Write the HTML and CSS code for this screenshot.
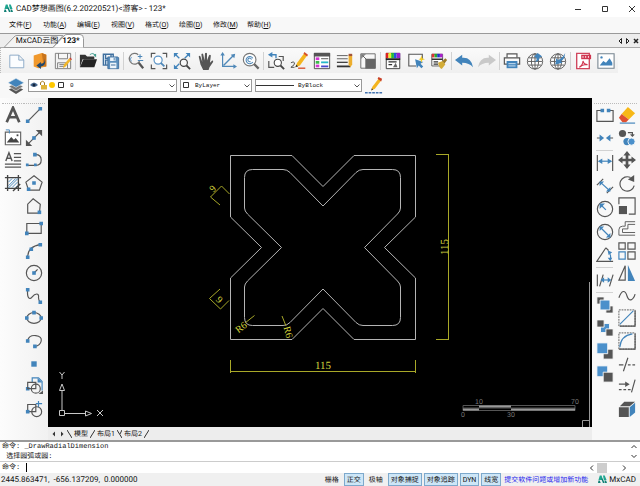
FILE: index.html
```
<!DOCTYPE html>
<html lang="zh-CN">
<head>
  <meta charset="UTF-8" />
  <meta name="viewport" content="width=device-width, initial-scale=1.0" />
  <title>CAD梦想画图</title>
  <link rel="stylesheet" href="styles.css">
</head>
<body>
  <svg class="defs" aria-hidden="true">
    <symbol id="logo" viewBox="0 0 20 20">
      <path d="M4 1h4l3 10H1zM11 1h4l4 10h-6z" fill="#1fa590"/>
      <path d="M1 12h3l2 6H0zM7 8h3l5 10h-4zM14 12h4l2 6h-4z" fill="#0f7f74"/>
    </symbol>
    <symbol id="down" viewBox="0 0 8 8"><path d="M1.500 2.500L4 5l2.500-2.500" fill="none" stroke="#555"/></symbol>
  </svg>

  <header class="title-bar">
    <svg class="logo"><use href="#logo"/></svg>
    <h1>CAD梦想画图(6.2.20220521)&lt;游客&gt; - 123*</h1>
    <div class="window-buttons">
      <button aria-label="最小化"><svg viewBox="0 0 8 8"><path d="M1 4.500h6"/></svg></button>
      <button aria-label="最大化"><svg viewBox="0 0 8 8"><path d="M1.500 1.500h5v5h-5z"/></svg></button>
      <button aria-label="关闭"><svg viewBox="0 0 8 8"><path d="M1 1l6 6M7 1L1 7"/></svg></button>
    </div>
  </header>

  <nav class="menu">
    <button>文件(<u>F</u>)</button>
    <button>功能(<u>A</u>)</button>
    <button>编辑(<u>E</u>)</button>
    <button>视图(<u>V</u>)</button>
    <button>格式(<u>O</u>)</button>
    <button>绘图(<u>D</u>)</button>
    <button>修改(<u>M</u>)</button>
    <button>帮助(<u>H</u>)</button>
  </nav>

  <div class="doc-tabs">
    <svg class="tab-shape" viewBox="0 0 90 14"><path d="M4 13.500L14 3q1-1.500 3-1.500h46L53 13.500z" fill="#f4f4f4"/><path d="M53 13.500L64 2q1-1.500 3-1.500h13q3.500 0 3.500 4v9" fill="#fff"/></svg>
    <button class="doc-tab">MxCAD云图</button>
    <button class="doc-tab active">123*</button>
    <div class="tab-nav">
      <button aria-label="上一个"><svg viewBox="0 0 8 8"><path d="M5.500 1.500v5L3 4z"/></svg></button>
      <button aria-label="下一个"><svg viewBox="0 0 8 8"><path d="M2.500 1.500v5L5 4z"/></svg></button>
      <button aria-label="关闭图纸"><svg viewBox="0 0 8 8"><path d="M2 2l4 4M6 2L2 6" stroke-width="1.500"/></svg></button>
    </div>
  </div>

  <div class="toolbar">
    <div class="group">
      <button aria-label="新建"><svg viewBox="0 0 20 20"><path d="M2 3.500h10l5.500 5.500v8.500H2zM12 3.500V9h5.500" fill="#fbfdff" stroke="#86a5c4"/></svg></button>
      <button aria-label="打开图纸"><svg viewBox="0 0 20 20"><path d="M3 4l9-3 5 2v13l-9 2-5-2z" fill="#f0982c"/><path d="M12 1l5 2v13h-3z" fill="#c8741c"/><path d="M15 7c1 4-1 6-4 6v-2l-5 4 5 4v-3c4 0 6-4 4-9z" fill="#23476b"/></svg></button>
      <button aria-label="保存"><svg viewBox="0 0 20 20"><path d="M1.500 1.500h17v17h-17zM5 1.500v6h10v-6M4 18v-6h11v6M6 14h7M6 16h6" fill="#f3f3f3" stroke="#777"/><path d="M10 18l1-4 6-7 2 2-6 7z" fill="#f0b62b"/><path d="M17 7l2 2 1-1-2-2z" fill="#c33"/></svg></button>
    </div>
    <i class="sep"></i>
    <div class="group">
      <button aria-label="打开"><svg viewBox="0 0 20 20"><path d="M1 17V3h6l2 2h8v3H4z" fill="#333"/><path d="M5 8h15l-3 9H1z" fill="#222"/><path d="M12 3q4-3 6 1" fill="none" stroke="#3d9b8c"/><path d="M16 3l3-1v4z" fill="#3d9b8c"/></svg></button>
      <button aria-label="另存为"><svg viewBox="0 0 20 20"><path d="M1.500 2.500h11v12h-11zM4 3v4h6V3M4 14V9h6" fill="#dce9f4" stroke="#3f6f9e" stroke-width="1.500"/><path d="M6.500 5.500h11l1 1v12h-12z" fill="#5b8fbd" stroke="#3f6f9e"/><path d="M9 6h6v4H9zM9 12h7v6H9z" fill="#eef5fb"/><path d="M13 6.500h1v3h-1zM10 14h5v1h-5z" fill="#3f6f9e"/></svg></button>
    </div>
    <i class="sep"></i>
    <div class="group">
      <button aria-label="缩放"><svg viewBox="0 0 20 20"><path d="M12.500 3A6 6 0 1 0 14 10" fill="none" stroke="#777" stroke-width="1.300"/><path d="M5 5.500a3.500 3.500 0 0 0 0 5" fill="none" stroke="#5b93c5"/><path d="M13 12l5 6" stroke="#555" stroke-width="2.500"/><path d="M12 5h5M14.500 2.500v5M12 9.500h6" stroke="#4f88b8" stroke-width="1.200"/></svg></button>
      <button aria-label="窗口缩放"><svg viewBox="0 0 20 20"><path d="M1.500 6V1.500H6M14 1.500h4.500V6M1.500 14v4.500H6M14 18.500h4.500V14" fill="none" stroke="#555" stroke-width="1.300"/><circle cx="9" cy="9" r="4.500" fill="#fff" stroke="#5b93c5" stroke-width="1.300"/><path d="M12 12l4 4" stroke="#4f88b8" stroke-width="2"/></svg></button>
      <button aria-label="全图"><svg viewBox="0 0 20 20"><path d="M1 1h5L1 6zM19 1h-5l5 5zM1 19h5l-5-5z" fill="#4284bb"/><path d="M3 3l4 4M17 3l-4 4M3 17l4-4" stroke="#4284bb" stroke-width="1.500"/><circle cx="12" cy="12" r="4" fill="#f8f8f8" stroke="#444" stroke-width="1.300"/><path d="M15 15l4 4" stroke="#444" stroke-width="2"/></svg></button>
      <button aria-label="平移"><svg viewBox="0 0 20 20"><path d="M3 5q1-1.500 2 0l2 6L6 2.500q1-1.500 2 0l1.500 7 .5-8q1.200-1.500 2.200 0v8L14.500 3.500q1.300-1.200 2 .5L15.500 12l2.500-2.500q1.500 0 1 1.500l-4 6-1 3H8l-3-6z" fill="#555"/></svg></button>
      <button aria-label="坐标系"><svg viewBox="0 0 20 20"><path d="M4 2v14h13" fill="none" stroke="#4f88b8" stroke-width="1.300"/><path d="M5 15L16 4" stroke="#4f88b8" stroke-width="1.500"/><path d="M18 2l-1 5-4-4zM4 0l2.500 4h-5zM20 16l-4 2.500v-5z" fill="#4f88b8"/></svg></button>
      <button aria-label="动态缩放"><svg viewBox="0 0 20 20"><circle cx="8.500" cy="8.500" r="7" fill="#fff" stroke="#777" stroke-width="1.300"/><path d="M12 7a4 4 0 1 0 0 4M10.500 8.500a2 2 0 1 0-1 2" fill="none" stroke="#4f88b8" stroke-width="1.200"/><path d="M13.500 13.500l5 5" stroke="#666" stroke-width="2.500"/></svg></button>
    </div>
    <i class="sep"></i>
    <div class="group">
      <button aria-label="查找"><svg viewBox="0 0 20 20"><path d="M2 10v7h6M13 5h5v5" fill="none" stroke="#555" stroke-width="1.300"/><path d="M6 0v6L1 3z" fill="#4284bb"/><path d="M5 3h5v4" fill="none" stroke="#4284bb" stroke-width="1.500"/><circle cx="12" cy="12" r="4" fill="#fff" stroke="#444" stroke-width="1.200"/><path d="M15 15l4 4" stroke="#444" stroke-width="2"/></svg></button>
      <button aria-label="画笔"><svg viewBox="0 0 20 20"><path d="M6 17l2-5 8-11 3 3-8 11z" fill="#f4b51e"/><path d="M15 2l1-2 4 3-1 2z" fill="#d64f2b"/><path d="M6 17l1-3 2 2z" fill="#333"/><path d="M1 12q3-2 4 0t-4 5h4" fill="none" stroke="#444"/><path d="M9 18h8" stroke="#d64f2b" stroke-width="1.500"/></svg></button>
      <button aria-label="图层管理"><svg viewBox="0 0 20 20"><path d="M1.500 1.500h17v17h-17z" fill="#fff" stroke="#444"/><path d="M1 1h18v4H1z" fill="#555"/><path d="M3 6h4v3H3z" fill="#d436d4"/><path d="M3 10h4v3H3z" fill="#3bbb4a"/><path d="M3 14h4v3H3z" fill="#d436d4"/><path d="M9 7h8v1H9z" fill="#444"/><path d="M9 10.500h8v2H9z" fill="#25b8c9"/><path d="M9 15h8v2H9z" fill="#4646cc"/></svg></button>
      <button aria-label="线型"><svg viewBox="0 0 20 20"><path d="M1 4h12M1 7.500h12" stroke="#555"/><path d="M1 11.500h12" stroke="#444" stroke-width="1.500"/><path d="M1 16h15" stroke="#333" stroke-width="2"/><path d="M14 3.500h4V14L16 17l-2-3z" fill="#edae2e"/><path d="M14 2h4v2.500h-4z" fill="#a2553a"/></svg></button>
      <button aria-label="块"><svg viewBox="0 0 20 20"><path d="M2 2h16v16H2z" fill="#f7f7f7" stroke="#666"/><path d="M7 7.500h11.500v11H7z" fill="#666"/><path d="M2 2h6L2 8z" fill="#888"/><path d="M4 4l4 4" stroke="#555"/></svg></button>
    </div>
    <i class="sep"></i>
    <div class="group">
      <button aria-label="颜色"><svg viewBox="0 0 20 20"><path d="M2.500 1.500h15v17h-15z" fill="#fff" stroke="#333"/><path d="M2 1h3v6H2z" fill="#d22"/><path d="M5 1h3v6H5z" fill="#ee3"/><path d="M8 1h3v6H8z" fill="#2b3"/><path d="M11 1h3v6h-3z" fill="#25d"/><path d="M14 1h4v6h-4z" fill="#92c"/><path d="M2 8h16" stroke="#222" stroke-width="2"/><path d="M5 11h9M5 14h4" stroke="#333" stroke-width="1.500"/><path d="M10 17l3-5 2 5z" fill="#666"/></svg></button>
      <button aria-label="快速选择"><svg viewBox="0 0 20 20"><path d="M17 9V2.500H2v13h8" fill="#fafafa" stroke="#555" stroke-width="1.200"/><path d="M9 8l9 3-3 2 3 3-2 2-3-3-2 3z" fill="#4284bb"/><path d="M16 4l1 3 3 1-3 1-1 3-1-3-2-1 2-1z" fill="#f1cb28"/></svg></button>
      <button aria-label="格式刷"><svg viewBox="0 0 20 20"><path d="M2 2.500h12v13H2z" fill="#fff" stroke="#555"/><path d="M2 2h3v4H2z" fill="#d33"/><path d="M5 2h3v4H5z" fill="#2a3"/><path d="M8 2h3v4H8z" fill="#23c"/><path d="M11 2h3v4h-3z" fill="#a2c"/><path d="M2 8h12M4 11h5M4 13.500h5" stroke="#333" stroke-width="1.500"/><path d="M9 12l5-2 3 4-4 5q-3-1-4-7z" fill="#d3ac36"/><path d="M14 10l3-3 2 2-3 4z" fill="#9c7a25"/></svg></button>
    </div>
    <i class="sep"></i>
    <div class="group">
      <button aria-label="撤销"><svg viewBox="0 0 20 20"><path d="M0 9l8-6v3.500q10-1 12 10.500-4-5-12-5v3z" fill="#4284bb"/></svg></button>
      <button aria-label="重做"><svg viewBox="0 0 20 20"><path d="M20 9l-8-6v3.500Q2 5.500 0 17q4-5 12-5v3z" fill="#c9c9c9"/></svg></button>
    </div>
    <i class="sep"></i>
    <div class="group">
      <button aria-label="打印"><svg viewBox="0 0 20 20"><path d="M4.500 6V2h11v4" fill="#fff" stroke="#555" stroke-width="1.300"/><path d="M1.500 6.500h17v7h-17z" fill="#f8f8f8" stroke="#555" stroke-width="1.300"/><path d="M4 10h12v8H4z" fill="#4284bb"/><path d="M6 13h8M6 15.500h8" stroke="#dcecf8"/></svg></button>
      <button aria-label="上传"><svg viewBox="0 0 20 20"><circle cx="10" cy="10.500" r="8.500" fill="#fff" stroke="#555"/><ellipse cx="10" cy="10.500" rx="4" ry="8.500" fill="none" stroke="#555"/><path d="M10 2v17M2 10.500h16M3 6.500h14M3 14.500h14" stroke="#555"/><path d="M13 1l5 4-3 1q0 4-5 5 3-3 1-5l-2-1z" fill="#4284bb"/></svg></button>
      <button aria-label="下载"><svg viewBox="0 0 20 20"><circle cx="10" cy="10.500" r="8.500" fill="#fff" stroke="#555"/><ellipse cx="10" cy="10.500" rx="4" ry="8.500" fill="none" stroke="#555"/><path d="M10 2v17M2 10.500h16M3 6.500h14M3 14.500h14" stroke="#555"/><path d="M18 1q-1 8-5 9l2 2-8 2 1-7 2 2q5-2 8-8z" fill="#4284bb"/></svg></button>
    </div>
    <i class="sep"></i>
    <div class="group">
      <button aria-label="导出PDF"><svg viewBox="0 0 20 20"><path d="M3 1.500h14v17H3z" fill="#fff" stroke="#d0455c" stroke-width="1.500"/><path d="M8 3h11v5H8z" fill="#cf3650"/><path d="M10 4.500v2M13 4.500v2M16 4.500v2" stroke="#fff"/><path d="M6 17q4-3 4-7 1 4 5 4-5-1-9 3z" fill="none" stroke="#d0354f" stroke-width="1.200"/></svg></button>
      <button aria-label="导出图片"><svg viewBox="0 0 20 20"><path d="M1 2h18v16H1z" fill="#fff" stroke="#76848f" stroke-width="1.200"/><path d="M3 15l4-5 3 2 4-5 3 5v3z" fill="#4284bb"/><circle cx="5" cy="6" r="1.300" fill="#4284bb"/></svg></button>
    </div>
  </div>

  <div class="properties">
    <button class="layers" aria-label="图层"><svg viewBox="0 0 20 20"><path d="M2 14l8-4 8 4-8 5z" fill="#555"/><path d="M2 10.500l8-4 8 4-8 5z" fill="#777" stroke="#f8f8f8" stroke-width=".6"/><path d="M1 6.500l9-5 9 5-9 5z" fill="#4284bb" stroke="#f8f8f8" stroke-width=".6"/></svg></button>
    <div class="combo layer-combo">
      <select aria-label="当前图层"><option>0</option></select>
      <svg class="combo-icons" viewBox="0 0 36 10">
        <path d="M1 5q4-5 8 0-4 4-8 0z" fill="#4d6d93"/><circle cx="5" cy="5" r="1.500" fill="#12253e"/>
        <path d="M11.500 5V2.500q2-2.500 4 0V5" fill="none" stroke="#a97b1e"/><path d="M12 5h6v4.500h-6z" fill="#deb43a"/>
        <circle cx="23" cy="5" r="3" fill="#ffc800"/>
        <path d="M29.500 2.500h5v5h-5z" fill="#fff" stroke="#333"/>
      </svg>
      <svg class="arrow"><use href="#down"/></svg>
    </div>
    <div class="combo color-combo">
      <select aria-label="颜色"><option>ByLayer</option></select>
      <svg class="combo-icons" viewBox="0 0 10 10"><path d="M2.500 2.500h5v5h-5z" fill="#fff" stroke="#333"/></svg>
      <svg class="arrow"><use href="#down"/></svg>
    </div>
    <div class="combo line-combo">
      <select aria-label="线型"><option>ByBlock</option></select>
      <svg class="combo-icons" viewBox="0 0 38 10"><path d="M0 5.500h38" stroke="#333"/></svg>
      <svg class="arrow"><use href="#down"/></svg>
    </div>
    <button class="layers" aria-label="线宽"><svg viewBox="0 0 20 20"><path d="M7 15l1-4 7-9 3 2-7 9z" fill="#f4b51e"/><path d="M14 2l1-2 4 2-1 3z" fill="#c9412a"/><path d="M7 15l.5-2.500 1.500 1.500z" fill="#333"/><path d="M0 17.500h20" stroke="#4373b0" stroke-width="1.500" stroke-dasharray="3 1"/></svg></button>
  </div>

  <main>
    <aside class="rail left-rail">
      <div class="tools text-tools">
        <button aria-label="文字"><svg viewBox="0 0 20 20"><path d="M3 18L10 2l7 16M6 12.500h8" fill="none" stroke="#555" stroke-width="3"/></svg></button>
        <button aria-label="图片"><svg viewBox="0 0 20 20"><path d="M1.500 3.500h17v14h-17z" fill="#fff" stroke="#666" stroke-width="1.300"/><path d="M3 15l5-6 3 3 2-2 4 5z" fill="#444"/><path d="M15 6v2" stroke="#444" stroke-width="2"/><path d="M2 1h4v4" fill="none" stroke="#4284bb"/></svg></button>
        <button aria-label="多行文字"><svg viewBox="0 0 20 20"><path d="M2 11l3.500-9L9 11M3 8h5" fill="none" stroke="#555" stroke-width="1.600"/><path d="M11 3h8M11 7h8M11 11h8M1 14.500h18M1 18h18" stroke="#555" stroke-width="1.400"/></svg></button>
        <button aria-label="填充"><svg viewBox="0 0 20 20"><path d="M4 1v18M16 1v18M1 4h18M1 16h18" stroke="#444" stroke-width="1.500"/><path d="M5 9l4-4M5 13l8-8M5 15.500L15.500 5M9 15l6-6M13 15l2-2" stroke="#4284bb"/><path d="M10 19l8-8" stroke="#444" stroke-width="1.500"/></svg></button>
      </div>
      <div class="tools draw-tools">
        <button aria-label="直线"><svg viewBox="0 0 20 20"><path d="M3 17L17 3"/><path class="dot" d="M1 15h4v4H1zM15 1h4v4h-4z"/></svg></button>
        <button aria-label="构造线"><svg viewBox="0 0 20 20"><path d="M3 17L17 3"/><path class="tip" d="M1 19v-7l7 7zM19 1v7l-7-7z"/><path class="dot" d="M8 8h4v4H8z"/></svg></button>
        <button aria-label="多段线"><svg viewBox="0 0 20 20"><path d="M2 16h10q6 0 6-6t-6-6h-2"/><path class="dot" d="M1 14h3v3H1zM10 14h3v3h-3zM9 2h4v4H9z"/></svg></button>
        <button aria-label="正多边形"><svg viewBox="0 0 20 20"><path d="M10 2l9 7-3 9H4L1 9z"/><path class="dot" d="M8 8h4v4H8zM2 15h4v4H2z"/></svg></button>
        <button aria-label="多边形"><svg viewBox="0 0 20 20"><path d="M9 2l8 6-1 10H3V8z"/><path class="dot" d="M14 15h4v4h-4z"/></svg></button>
        <button aria-label="矩形"><svg viewBox="0 0 20 20"><path d="M2 5h16v11H2z"/><path class="dot" d="M0 14h4v4H0zM16 3h4v4h-4z"/></svg></button>
        <button aria-label="圆弧"><svg viewBox="0 0 20 20"><path d="M3 17Q3 5 17 3"/><path class="dot" d="M1 15h4v4H1zM5 6h4v4H5zM15 1h4v4h-4z"/></svg></button>
        <button aria-label="圆"><svg viewBox="0 0 20 20"><circle cx="10" cy="10" r="8.500"/><path d="M10 10l4-4"/><path class="dot" d="M8 8h4v4H8z"/></svg></button>
        <button aria-label="样条曲线"><svg viewBox="0 0 20 20"><path d="M3 3c-1 9 2 12 5 8s8-5 7 1q0 3 2 5"/><path class="dot" d="M1 1h4v4H1zM15 15h4v4h-4z"/></svg></button>
        <button aria-label="椭圆"><svg viewBox="0 0 20 20"><ellipse cx="10" cy="10" rx="8" ry="6"/><path class="dot" d="M0 8h4v4H0zM16 8h4v4h-4zM8 2h4v4H8z"/></svg></button>
        <button aria-label="椭圆弧"><svg viewBox="0 0 20 20"><path d="M3 9q2-6 9-5t6 6-7 6"/><path class="dot" d="M1 8h4v4H1zM9 14h4v4H9z"/></svg></button>
        <button aria-label="点"><svg viewBox="0 0 20 20"><path class="dot" d="M7 7h6v6H7z"/></svg></button>
        <button aria-label="插入块"><svg viewBox="0 0 20 20"><path d="M8 6V1h7l4 4v10" class="blue"/><path class="dot" d="M14 1l5 5h-5zM1 11h4v4H1z"/><path d="M3 6h9v7H3z"/><circle cx="12" cy="13" r="5"/><path class="tip" d="M15 19h5v-4z"/></svg></button>
        <button aria-label="创建块"><svg viewBox="0 0 20 20"><path d="M15 1v7M12 4h7" class="blue"/><path d="M3 5h9v8H3z"/><circle cx="13" cy="13" r="5.500"/><path class="dot" d="M1 11h4v4H1z"/></svg></button>
      </div>
    </aside>

    <section class="workspace">
      <svg class="drawing" viewBox="48 98 544 330" preserveAspectRatio="xMinYMin slice">
        <g class="part">
          <path d="M230.500 155.500H292l31 31 31-31h61.500V217l-31 30.500 31 30.500v61.500H354l-31-31-31 31h-61.500V278l31-30.500-31-30.500z"/>
          <path d="M252.500 169.500H283q4 0 7 3l33 33.500 33-33.500q3-3 7-3h29.500q8 0 8 8V208q0 3-3 6l-33 33.500 33 33.500q3 3 3 6v30.500q0 8-8 8H363q-4 0-7-3L323 289l-33 33.500q-3 3-7 3h-30.500q-8 0-8-8V287q0-3 3-6l34-33.500-34-33.500q-3-3-3-6v-30.500q0-8 8-8z"/>
        </g>
        <g class="dims">
          <path d="M436 154.500h13M436 339.500h13M448.500 154.500v185M230.500 360v13M415.500 360v13M230 371.500h186"/>
          <path d="M220 205l-9.500-8 11-11 8 8M220 289l-10.500 9.500 11 10.500 8.500-8.500M245 323l9.500-7.500M282 316l4 10"/>
          <text x="323" y="369" class="size">115</text>
          <text transform="translate(448 247) rotate(-90)" class="size">115</text>
          <text transform="translate(215 191) rotate(-45)">9</text>
          <text transform="translate(217 302) rotate(45)">9</text>
          <text transform="translate(243 330) rotate(-38)">R6</text>
          <text transform="translate(285 333) rotate(75)">R6</text>
        </g>
        <g class="axis">
          <path d="M59.500 410.500h5v5h-5zM62 410v-20M59.500 390.500h5L62 384zM65 413.500h20M85.500 411v5l6-2.500z"/>
          <path d="M97 410l6 6M103 410l-6 6M59.500 372l2.500 3 2.500-3M62 375v4"/>
          <path d="M443 427.500h149M589.500 282v145M582.500 428v-7.500h7" class="frame"/>
        </g>
        <g class="scale">
          <path d="M463 405.500h112v5H463zM463 408h112" class="outline"/>
          <path d="M463 409.500h16M479 406.500h32M511 409.500h64" class="bars"/>
          <text x="479" y="404">10</text>
          <text x="575" y="404">70</text>
          <text x="463" y="417">0</text>
          <text x="511" y="417">30</text>
        </g>
      </svg>
      <div class="sheet-tabs">
        <button aria-label="向左"><svg viewBox="0 0 8 8"><path d="M5 1.500v5L2.500 4z" fill="#333"/></svg></button>
        <button aria-label="向右"><svg viewBox="0 0 8 8"><path d="M3 1.500v5L5.500 4z" fill="#333"/></svg></button>
        <svg class="slash" viewBox="0 0 5 10"><path d="M0 1l5 8"/></svg>
        <button class="sheet current">模型</button>
        <svg class="slash" viewBox="0 0 5 10"><path d="M5 1L0 9"/></svg>
        <button class="sheet">布局1</button>
        <svg class="slash" viewBox="0 0 5 10"><path d="M0 1l5 8M5 1L3 5"/></svg>
        <button class="sheet">布局2</button>
        <svg class="slash" viewBox="0 0 5 10"><path d="M5 1L0 9"/></svg>
      </div>
    </section>

    <aside class="rail right-rail">
      <div class="tools dim-tools">
        <button aria-label="打断"><svg viewBox="0 0 20 20"><path d="M6 5H1v12h18V5h-5"/><path class="dot" d="M5 3h4v4H5zM12 3h4v4h-4z"/></svg></button>
        <button aria-label="合并"><svg viewBox="0 0 20 20"><path d="M1 10h6M13 10h6"/><path class="dot" d="M4 6l5 4-5 4zM16 6l-5 4 5 4z"/></svg></button>
        <i class="rule"></i>
        <button aria-label="线性标注"><svg viewBox="0 0 20 20"><path d="M1.500 1v18M18.500 1v18"/><path d="M4 8h12" class="blue"/><path class="dot" d="M2 8l5-3v6zM18 8l-5-3v6z"/></svg></button>
        <button aria-label="对齐标注"><svg viewBox="0 0 20 20"><path d="M1 9l7-7M12 18l7-7"/><path d="M5 6l10 9" class="blue"/><path class="dot" d="M4 5h5L4 10zM16 16h-5l5-5z"/></svg></button>
        <button aria-label="半径标注"><svg viewBox="0 0 20 20"><circle cx="10" cy="10" r="8.500"/><path d="M5 5l6 6" class="blue"/><path class="dot" d="M4 4h6L4 10z"/></svg></button>
        <button aria-label="直径标注"><svg viewBox="0 0 20 20"><circle cx="10" cy="10" r="8.500"/><path d="M5 5l10 10" class="blue"/><path class="dot" d="M4 4h5L4 9zM16 16h-5l5-5z"/></svg></button>
        <button aria-label="角度标注"><svg viewBox="0 0 20 20"><path d="M11 2L1 17h18M11 2l3 3"/><path d="M14 6q3 4 2 9" class="blue"/><path class="dot" d="M13 5l5 2-4 3zM13 13h5l-2 4z"/></svg></button>
        <i class="rule"></i>
        <button aria-label="连续标注"><svg viewBox="0 0 20 20"><path d="M1.500 4v13M4 17L8 4M15 17l4-13"/><path d="M6 10h9" class="blue"/><path class="dot" d="M5 10l4-3v6zM17 10l-4-3v6z"/></svg></button>
        <i class="rule"></i>
        <button aria-label="置于前面"><svg viewBox="0 0 20 20"><path class="dark" d="M1 1h8v8H1zM11 11h8v8h-8z"/><path class="face" d="M4.500 4.500h11v11h-11z"/></svg></button>
        <button aria-label="置于后面"><svg viewBox="0 0 20 20"><path class="face" d="M5 5h10v10H5z"/><path class="dark" d="M1 1h8v8H1zM11 11h8v8h-8z"/></svg></button>
        <button aria-label="前置"><svg viewBox="0 0 20 20"><path class="dark" d="M8 8h11v11H8z"/><path class="face" d="M1 1h12v12H1z"/></svg></button>
        <button aria-label="后置"><svg viewBox="0 0 20 20"><path class="face" d="M1 1h12v12H1z"/><path class="dark" d="M8 8h11v11H8z"/></svg></button>
      </div>
      <div class="tools edit-tools">
        <button aria-label="删除"><svg viewBox="0 0 20 20"><path d="M11 1l8 7-7 7-8-6z" fill="#f7b817" stroke="none"/><path d="M4 9l8 6-3 3H5l-4-5z" fill="#df5030" stroke="none"/><path d="M2 19h17" class="blue"/></svg></button>
        <button aria-label="复制"><svg viewBox="0 0 20 20"><circle cx="5" cy="5" r="4" class="tip"/><circle cx="10" cy="14" r="4" class="dot"/><circle cx="15" cy="14" r="4" class="face"/><path d="M11 4h5v4M14 6l2 2 2-2"/></svg></button>
        <button aria-label="移动"><svg viewBox="0 0 20 20"><path d="M10 3v14M3 10h14" stroke-width="3"/><path class="tip" d="M10 0l4 5H6zM10 20l4-5H6zM0 10l5-4v8zM20 10l-5-4v8z"/></svg></button>
        <button aria-label="旋转"><svg viewBox="0 0 20 20"><path d="M14 4A8 8 0 1 0 18 13"/><path class="tip" d="M11 6l7-5v8z"/></svg></button>
        <button aria-label="缩放对象"><svg viewBox="0 0 20 20"><path d="M1 8V1h18v18h-7"/><path class="tip" d="M1 10h9v9H1z"/></svg></button>
        <button aria-label="偏移"><svg viewBox="0 0 20 20"><path d="M19 3H8v5H5q-4 0-4 4v6h18M19 6h-8v5H5v4h14" stroke-width="1"/></svg></button>
        <button aria-label="阵列"><svg viewBox="0 0 20 20"><path d="M1 1h7v7H1zM11 1h8v7h-8zM11 11h8v8h-8z"/><path d="M1 11h7v8H1z" class="blue"/></svg></button>
        <button aria-label="镜像"><svg viewBox="0 0 20 20"><path d="M8 2v16H1z"/><path class="dot" d="M11 1v18h8z"/></svg></button>
        <button aria-label="曲线编辑"><svg viewBox="0 0 20 20"><path d="M1 12c3-9 7-9 9-2s7 5 9-2"/></svg></button>
        <button aria-label="倒角"><svg viewBox="0 0 20 20"><path d="M1 1h18v18H1z" stroke-dasharray="2 1" stroke-width="1"/><path d="M19 2v17H2"/><path d="M2 17L17 2" class="blue"/></svg></button>
        <button aria-label="圆角"><svg viewBox="0 0 20 20"><path d="M1 1h18v18H1z" stroke-dasharray="2 1" stroke-width="1"/><path d="M19 2v17H1"/><path d="M2 17Q3 4 16 2" class="blue"/></svg></button>
        <button aria-label="修剪"><svg viewBox="0 0 20 20"><path d="M1 11h5M11 11h3M16 11h3M6 18L11 3"/></svg></button>
        <button aria-label="延伸"><svg viewBox="0 0 20 20"><path d="M1 8h9M1 14h3M6 14h3M11 14h3M15 17l4-14"/><path class="tip" d="M8 5l5 3-5 3z"/></svg></button>
        <button aria-label="三维"><svg viewBox="0 0 20 20"><path class="tip" d="M1 8h11v11H1zM2 7l5-5h12l-6 5z"/><path class="dot" d="M13 8l6-5v11l-6 5z"/></svg></button>
      </div>
    </aside>
  </main>

  <section class="command">
    <div class="history">
      <p>命令: _DrawRadialDimension<br>&nbsp;选择圆弧或圆:</p>
      <div class="v-scroll">
        <svg viewBox="0 0 8 8"><path d="M1.500 5L4 2.500 6.500 5"/></svg>
        <svg viewBox="0 0 8 8"><path d="M1.500 3L4 5.500 6.500 3"/></svg>
      </div>
    </div>
    <div class="prompt">
      <label for="cmd">命令:</label>
      <i class="caret"></i>
      <input id="cmd" type="text">
      <div class="h-scroll">
        <svg viewBox="0 0 8 8"><path d="M5 1.500L2.500 4 5 6.500"/></svg>
        <i class="thumb"></i>
        <svg viewBox="0 0 8 8"><path d="M3 1.500L5.500 4 3 6.500"/></svg>
      </div>
    </div>
  </section>

  <footer class="status">
    <span class="coords">2445.863471,&nbsp; -656.137209,&nbsp; 0.000000</span>
    <div class="modes">
      <button>栅格</button>
      <button class="on">正交</button>
      <button>极轴</button>
      <button class="on">对象捕捉</button>
      <button class="on">对象追踪</button>
      <button class="on">DYN</button>
      <button class="on">线宽</button>
    </div>
    <a href="#">提交软件问题或增加新功能</a>
    <span class="brand"><svg class="logo"><use href="#logo"/></svg>MxCAD</span>
  </footer>
</body>
</html>
```
FILE: styles.css
```
* {
  box-sizing: border-box;
}

body {
  margin: 0;
  height: 100vh;
  display: flex;
  flex-direction: column;
  overflow: hidden;
  background: #f8f8f8;
  color: #111;
  font-family: Roboto, "Noto Sans CJK SC", sans-serif;
  font-size: 8px;
  line-height: 12px;
  text-rendering: geometricPrecision;
}

button {
  display: flex;
  align-items: center;
  justify-content: center;
  padding: 0;
  border: none;
  background: none;
  color: inherit;
  font: inherit;
  text-rendering: inherit;
  white-space: nowrap;
}

svg {
  display: block;
  flex: none;
}

.defs {
  position: absolute;
  width: 0;
  height: 0;
}

.logo {
  width: 9px;
  height: 9px;
}

/* title and menu */
.title-bar {
  display: flex;
  align-items: center;
  gap: 3px;
  height: 17px;
  padding: 0 4px;
  background: #fff;
}

.title-bar h1 {
  margin: 0;
  font-size: 8px;
  font-weight: 400;
}

.window-buttons {
  display: flex;
  gap: 19px;
  margin-left: auto;
}

.window-buttons svg,
.tab-nav svg,
.sheet-tabs button svg,
.v-scroll svg,
.h-scroll svg {
  width: 8px;
  height: 8px;
}

.window-buttons path,
.v-scroll path,
.h-scroll path {
  fill: none;
  stroke: #333;
}

.menu {
  display: flex;
  gap: 10px;
  height: 16px;
  padding-left: 9px;
}

.menu button {
  width: 24px;
  justify-content: flex-start;
  font-size: 7px;
}

/* open drawings */
.doc-tabs {
  position: relative;
  display: flex;
  align-items: center;
  height: 15px;
  padding-left: 17px;
  border-top: 1px solid #999;
  border-bottom: 1px solid #aaa;
  background: #ededed;
}

.tab-shape {
  position: absolute;
  left: 0;
  bottom: -1px;
  width: 90px;
  height: 14px;
}

.tab-shape path {
  stroke: #999;
}

.doc-tab {
  position: relative;
  width: 40px;
  font-size: 8px;
}

.doc-tab.active {
  width: 28px;
  font-weight: 700;
}

.tab-nav {
  display: flex;
  margin-left: auto;
}

.tab-nav path {
  fill: none;
  stroke: #222;
}

/* toolbars */
.toolbar {
  display: flex;
  align-items: center;
  align-self: flex-start;
  gap: 2px;
  height: 25px;
  padding: 0 2px 0 6px;
  border-left: 1px dotted #bbb;
  background: linear-gradient(#fafafa, #efefef);
}

.group {
  display: flex;
  gap: 3px;
}

.toolbar button,
.toolbar button svg {
  width: 20px;
  height: 20px;
}

.toolbar button svg {
  padding: 1px;
}

.sep {
  width: 1px;
  height: 18px;
  background: #d2d2d2;
}

.properties {
  display: flex;
  align-items: center;
  gap: 3px;
  height: 25px;
  padding-left: 7px;
}

.layers svg {
  width: 18px;
  height: 18px;
}

.combo {
  position: relative;
  height: 13px;
}

.combo select {
  appearance: none;
  display: block;
  width: 100%;
  height: 100%;
  margin: 0;
  padding: 0 10px 0 14px;
  border: 1px solid #999;
  border-radius: 0;
  background: #fff;
  color: #111;
  font-family: "Liberation Mono", "Noto Sans CJK SC", monospace;
  font-size: 6px;
}

.layer-combo {
  width: 149px;
}

.layer-combo select {
  padding-left: 41px;
}

.color-combo {
  width: 72px;
}

.line-combo {
  width: 107px;
}

.line-combo select {
  padding-left: 42px;
}

.combo-icons {
  position: absolute;
  left: 1px;
  top: 1px;
  height: 10px;
}

.arrow {
  position: absolute;
  right: 1px;
  top: 3px;
  width: 8px;
  height: 8px;
}

/* tool rails and drawing */
main {
  flex: 1;
  display: flex;
  min-height: 0;
}

.rail {
  display: flex;
  flex: none;
  width: 48px;
  padding: 5px 3px 20px;
}

.tools {
  display: grid;
  grid-template-rows: repeat(14, 1fr);
  width: 22px;
}

.left-rail {
  padding-left: 2px;
  background: linear-gradient(90deg, #fcfcfc, #f1f1f1);
}

.right-rail {
  gap: 1px;
  padding-left: 2px;
}

.left-rail .tools,
.right-rail .edit-tools {
  border-top: 1px dotted #bbb;
}

.tools svg {
  width: 18px;
  height: 18px;
}

.dim-tools {
  display: flex;
  flex-direction: column;
  gap: 1px;
  border-top: 1px dotted #bbb;
}

.dim-tools button {
  height: 22px;
}

.rule {
  height: 1px;
  margin: 0 2px;
  background: #d2d2d2;
}

.draw-tools svg,
.right-rail svg {
  fill: none;
  stroke: #555;
  stroke-width: 1.3px;
}

.rail .blue {
  stroke: #4284bb;
}

.rail .dot {
  fill: #4284bb;
  stroke: none;
}

.rail .tip {
  fill: #555;
  stroke: none;
}

.rail .dark {
  fill: #555;
  stroke: #f8f8f8;
  stroke-width: 1px;
}

.rail .face {
  fill: #4b90cb;
  stroke: #f8f8f8;
  stroke-width: 1px;
}

.workspace {
  flex: 1;
  display: flex;
  flex-direction: column;
  min-width: 0;
}

.drawing {
  flex: 1;
  width: 100%;
  min-height: 0;
  background: #000;
  font-family: "Liberation Serif", serif;
}

.drawing path {
  fill: none;
}

.part path {
  stroke: #b4b4b4;
}

.dims path {
  stroke: #a8a828;
}

.dims text {
  fill: #d2d23c;
  font-size: 10px;
  text-anchor: middle;
}

.dims .size {
  font-size: 11px;
}

.axis path {
  stroke: #c8c8c8;
}

.axis .frame {
  stroke: #999;
}

.scale .outline {
  stroke: #555;
}

.scale .bars {
  stroke: #999;
  stroke-width: 2px;
}

.scale text {
  fill: #777;
  font-family: "Liberation Sans", sans-serif;
  font-size: 7px;
  text-anchor: middle;
}

.sheet-tabs {
  display: flex;
  align-items: center;
  height: 13px;
  padding-left: 2px;
  background: #ededed;
  font-size: 7px;
}

.slash {
  width: 5px;
  height: 10px;
  margin: 0 1px;
}

.slash path {
  fill: none;
  stroke: #333;
}

.sheet {
  padding: 0 1px;
}

/* command line */
.command {
  border-top: 2px solid #999;
  background: #fff;
  font-family: "Liberation Mono", "Noto Sans CJK SC", monospace;
  font-size: 7px;
  line-height: 10px;
}

.history {
  display: flex;
  justify-content: space-between;
  height: 20px;
  border-bottom: 1px solid #ccc;
}

.history p {
  margin: 0;
  padding-left: 2px;
}

.v-scroll {
  display: flex;
  flex-direction: column;
  justify-content: space-between;
  padding: 1px 2px 1px 0;
}

.prompt {
  display: flex;
  align-items: center;
  height: 11px;
  padding-left: 2px;
}

.caret {
  width: 1px;
  height: 9px;
  margin-left: 6px;
  background: #000;
}

.prompt input {
  flex: 1;
  min-width: 0;
  height: 9px;
  padding: 0;
  border: none;
  outline: none;
  font: inherit;
}

.h-scroll {
  display: flex;
  align-items: center;
  gap: 1px;
  padding-right: 12px;
}

.thumb {
  width: 10px;
  height: 10px;
  margin-right: 12px;
  background: #cdcdcd;
}

/* status bar */
.status {
  display: flex;
  align-items: center;
  height: 13px;
  padding: 0 4px 0 1px;
  background: #f0f0f0;
  font-size: 8px;
}

.modes {
  display: flex;
  gap: 2px;
  margin-left: auto;
  font-size: 7px;
}

.modes button {
  height: 13px;
  padding: 0 2px;
  border: 1px solid transparent;
}

.modes .on {
  border-color: #7da9cc;
  background: #cde6f7;
}

.status a {
  margin: 0 10px 0 3px;
  color: #1a1aee;
  font-size: 7px;
  text-decoration: none;
}

.brand {
  display: flex;
  align-items: center;
  gap: 2px;
}
```
